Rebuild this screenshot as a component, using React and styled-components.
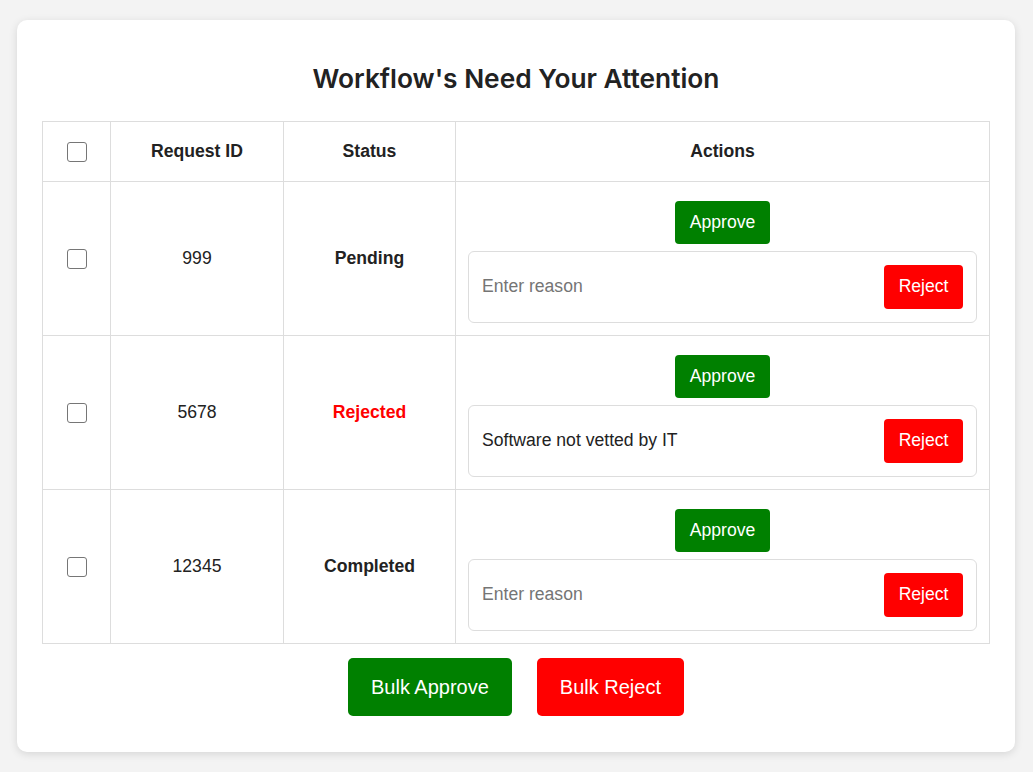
import React from "react";
import styled, { createGlobalStyle } from "styled-components";

const Global = createGlobalStyle`
  html, body { margin: 0; padding: 0; background: #f3f3f3; }
  body { font-family: "Liberation Sans", Arial, sans-serif; color: #222; }
`;

const Page = styled.div`
  padding: 20px 0 20px 17px;
`;

const Card = styled.div`
  width: 998px;
  box-sizing: border-box;
  background: #fff;
  border-radius: 10px;
  box-shadow: 0 2px 8px rgba(0, 0, 0, 0.12);
  padding: 24px 25px 36px;
`;

const Title = styled.h2`
  font-family: Inter, "Noto Sans", sans-serif;
  font-size: 26.3px;
  font-weight: 600;
  line-height: 29px;
  text-align: center;
  margin: 20px 0 28px;
  color: #222;
`;

const Table = styled.table`
  width: 947px;
  border-collapse: collapse;
  table-layout: fixed;
`;

const Th = styled.th`
  border: 1px solid #ddd;
  height: 59px;
  padding: 0;
  font-size: 17.6px;
  font-weight: 700;
  text-align: center;
  vertical-align: middle;
`;

const Td = styled.td`
  border: 1px solid #ddd;
  height: 154px;
  padding: 0;
  font-size: 17.6px;
  text-align: center;
  vertical-align: middle;
  box-sizing: border-box;
`;

const StatusText = styled.span`
  font-weight: 700;
  color: ${(p) => (p.$rejected ? "#ff0000" : "#222")};
`;

const Check = styled.input.attrs({ type: "checkbox" })`
  appearance: none;
  width: 20px;
  height: 20px;
  margin: 0;
  border: 1.5px solid #767676;
  border-radius: 3px;
  background: #fff;
  vertical-align: middle;
  box-sizing: border-box;
`;

const ActionsCell = styled.div`
  display: flex;
  flex-direction: column;
  align-items: center;
  padding: 6px 12px 0;
`;

const Btn = styled.button`
  border: none;
  color: #fff;
  font-family: "Liberation Sans", Arial, sans-serif;
  font-size: 17.6px;
  border-radius: 4px;
  padding: 0 ${(p) => p.$px || 15}px;
  height: ${(p) => p.$h || 43}px;
  background: ${(p) => (p.$variant === "red" ? "#ff0000" : "#008000")};
  cursor: pointer;
`;

const ApproveBtn = styled(Btn)`
  margin-bottom: 7px;
`;

const ReasonBox = styled.div`
  align-self: stretch;
  height: 72px;
  box-sizing: border-box;
  border: 1px solid #ddd;
  border-radius: 6px;
  display: flex;
  align-items: center;
  padding: 0 13px 0 13px;
  gap: 10px;
`;

const ReasonInput = styled.input`
  flex: 1;
  min-width: 0;
  border: none;
  outline: none;
  font-family: "Liberation Sans", Arial, sans-serif;
  font-size: 17.6px;
  color: #222;
  padding: 0;
  background: transparent;
  &::placeholder { color: #757575; }
`;

const Footer = styled.div`
  display: flex;
  justify-content: center;
  gap: 25px;
  margin-top: 14px;
`;

const BulkBtn = styled(Btn)`
  font-size: 20px;
  height: 58px;
  padding: 0 23px;
  border-radius: 5px;
`;

const rows = [
  { id: "999", status: "Pending", reason: "" },
  { id: "5678", status: "Rejected", reason: "Software not vetted by IT" },
  { id: "12345", status: "Completed", reason: "" },
];

export default function App() {
  return (
    <Page>
      <Global />
      <Card>
        <Title>Workflow's Need Your Attention</Title>
        <Table>
          <colgroup>
            <col style={{ width: 68 }} />
            <col style={{ width: 173 }} />
            <col style={{ width: 172 }} />
            <col style={{ width: 534 }} />
          </colgroup>
          <thead>
            <tr>
              <Th><Check /></Th>
              <Th>Request ID</Th>
              <Th>Status</Th>
              <Th>Actions</Th>
            </tr>
          </thead>
          <tbody>
            {rows.map((r) => (
              <tr key={r.id}>
                <Td><Check /></Td>
                <Td>{r.id}</Td>
                <Td>
                  <StatusText $rejected={r.status === "Rejected"}>{r.status}</StatusText>
                </Td>
                <Td>
                  <ActionsCell>
                    <ApproveBtn>Approve</ApproveBtn>
                    <ReasonBox>
                      <ReasonInput placeholder="Enter reason" defaultValue={r.reason} />
                      <Btn $variant="red" $h={44} $px={14.5}>Reject</Btn>
                    </ReasonBox>
                  </ActionsCell>
                </Td>
              </tr>
            ))}
          </tbody>
        </Table>
        <Footer>
          <BulkBtn>Bulk Approve</BulkBtn>
          <BulkBtn $variant="red">Bulk Reject</BulkBtn>
        </Footer>
      </Card>
    </Page>
  );
}
